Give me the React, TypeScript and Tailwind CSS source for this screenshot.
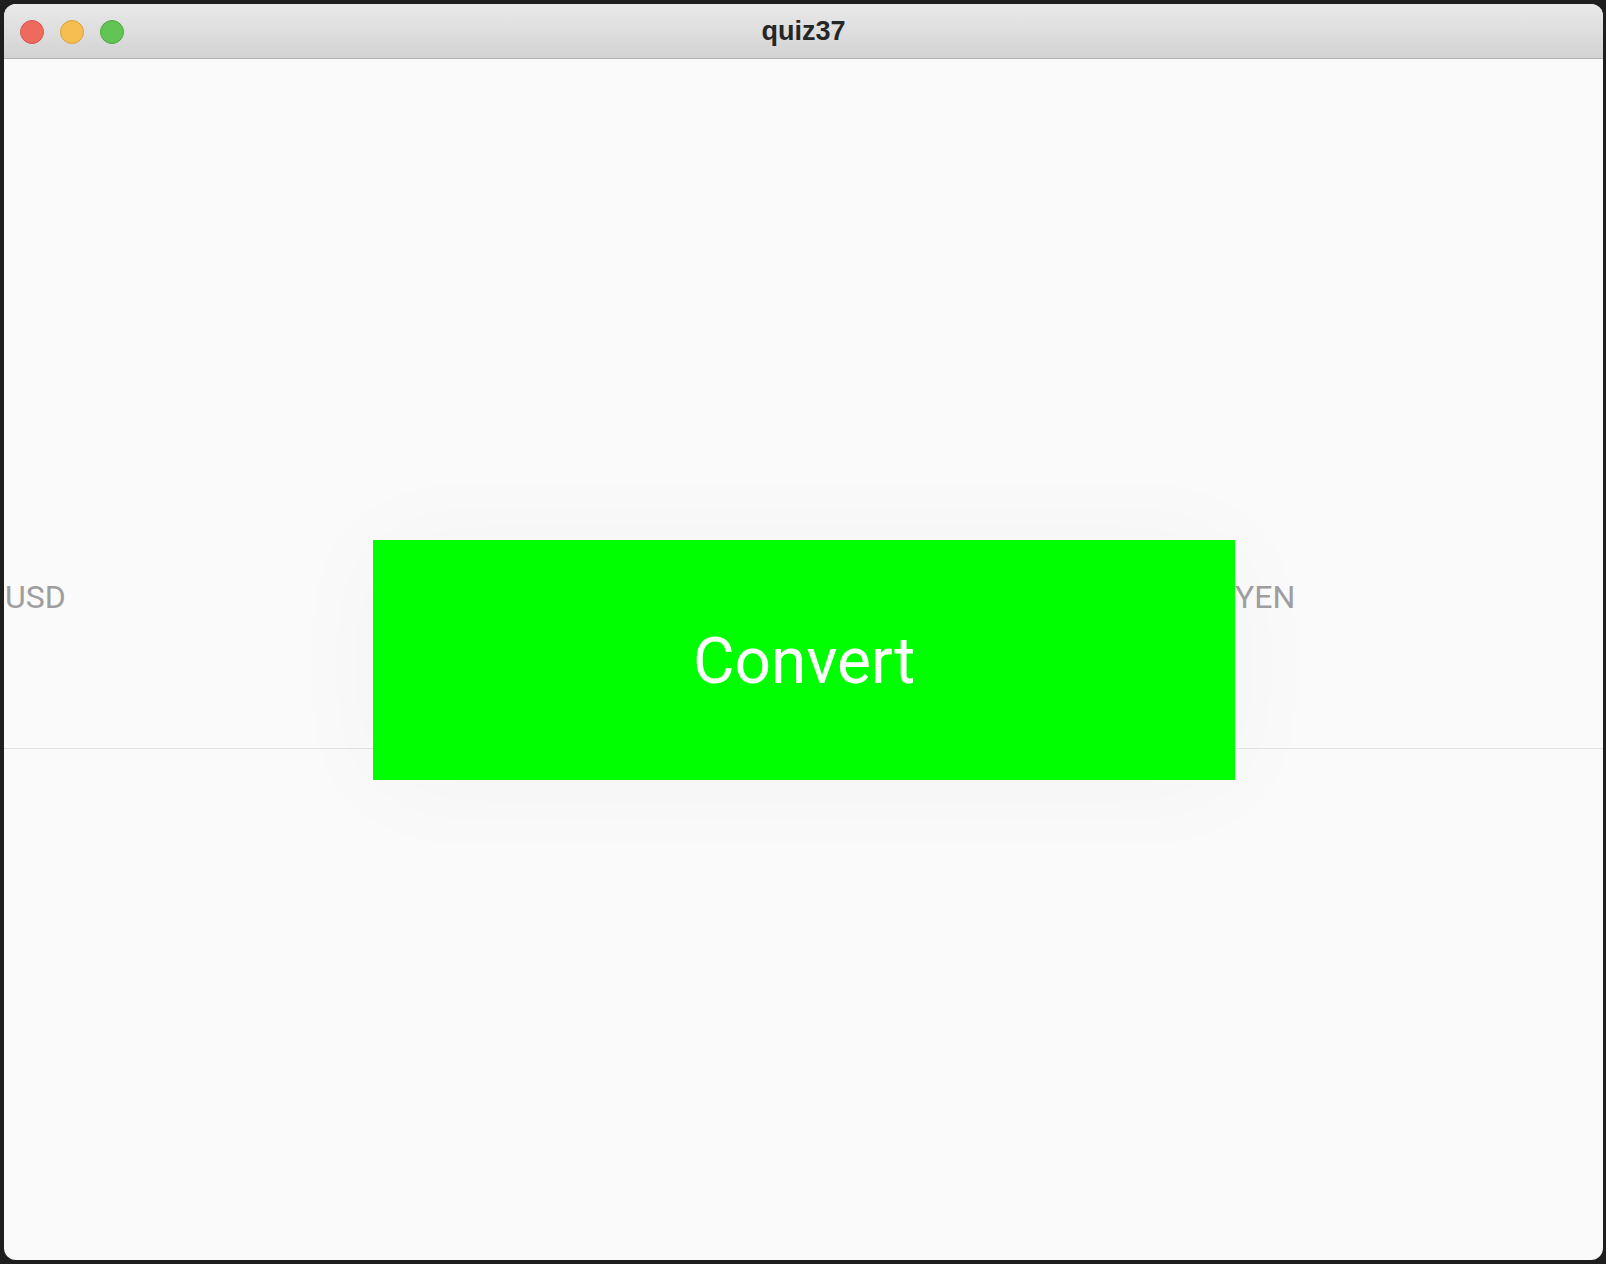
import React from "react";

export default function App() {
  return (
    <div className="w-[1606px] h-[1264px] bg-[#1e1e1e] pl-[4px] pt-[4px] overflow-hidden">
      <div className="w-[1599px] h-[1256px] rounded-[12px] overflow-hidden bg-[#fafafa] flex flex-col">
        {/* Title bar */}
        <div className="relative h-[55px] shrink-0 bg-gradient-to-b from-[#e9e9e9] to-[#d3d3d3] border-b border-[#b2b2b2] flex items-center">
          <div className="flex items-center gap-[16px] pl-[16px] pt-[2px]">
            <span className="w-[24px] h-[24px] rounded-full bg-[#ee6a5f] border border-[#d5564b]" />
            <span className="w-[24px] h-[24px] rounded-full bg-[#f6be50] border border-[#d9a23b]" />
            <span className="w-[24px] h-[24px] rounded-full bg-[#61c454] border border-[#4ea93f]" />
          </div>
          <div
            className="absolute inset-x-0 top-0 h-[54px] flex items-center justify-center text-[27px] font-bold text-[#262626] pt-[1px]"
            style={{ fontFamily: '"Liberation Sans", Arial, sans-serif' }}
          >
            quiz37
          </div>
        </div>

        {/* Content */}
        <div
          className="flex-1 flex items-center"
          style={{ fontFamily: 'Roboto, "Noto Sans", sans-serif' }}
        >
          <div className="w-full h-[240px] flex items-center">
            <div className="w-[369px] h-[179px] border-b border-[#e2e2e2] pl-[1px] pt-[3px]">
              <span className="text-[32px] leading-[48px] text-[#9e9e9e]">USD</span>
            </div>
            <button className="w-[862px] h-[240px] shrink-0 bg-[#00ff00] text-white text-[64px] leading-none shadow-[0_4px_110px_rgba(0,0,0,0.03)] flex items-center justify-center pt-[4px]">
              Convert
            </button>
            <div className="flex-1 h-[179px] border-b border-[#e2e2e2] pt-[3px]">
              <span className="text-[32px] leading-[48px] text-[#9e9e9e]">YEN</span>
            </div>
          </div>
        </div>
      </div>
    </div>
  );
}
